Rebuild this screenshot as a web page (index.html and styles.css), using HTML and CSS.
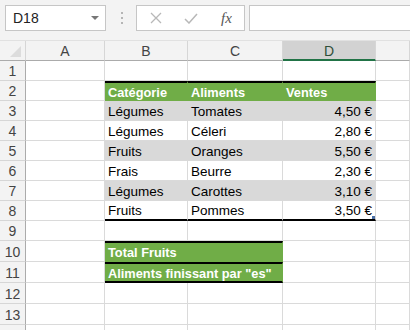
FILE: index.html
```html
<!DOCTYPE html>
<html lang="fr">
<head>
  <meta charset="UTF-8" />
  <meta name="viewport" content="width=device-width, initial-scale=1.0" />
  <title>Classeur</title>
  <link rel="stylesheet" href="styles.css">
</head>
<body>
  <div class="formula-bar">
    <div class="name-box">
      <span>D18</span>
      <span class="caret"></span>
    </div>
    <div class="grip"><i></i><i></i><i></i></div>
    <div class="fx-buttons">
      <svg class="btn-icon" width="12" height="12" viewBox="0 0 12 12">
        <path d="M1 1 L11 11 M11 1 L1 11" stroke="#b8b8b8" stroke-width="1.3" fill="none" />
      </svg>
      <svg class="btn-icon" width="14" height="11" viewBox="0 0 14 11">
        <path d="M1 6 L5 10 L13 1" stroke="#b8b8b8" stroke-width="1.5" fill="none" />
      </svg>
      <span class="fx">fx</span>
    </div>
    <div class="formula-input"></div>
  </div>

  <div class="sheet">
    <div class="row head">
      <div class="c corner"><span class="tri"></span></div>
      <div class="c ch">A</div>
      <div class="c ch">B</div>
      <div class="c ch">C</div>
      <div class="c ch selected">D</div>
      <div class="c ch"></div>
    </div>
    <div class="row">
      <div class="c rh">1</div><div class="c"></div><div class="c"></div><div class="c"></div><div class="c"></div><div class="c"></div>
    </div>
    <div class="row">
      <div class="c rh">2</div><div class="c"></div>
      <div class="c green top">Catégorie</div>
      <div class="c green top">Aliments</div>
      <div class="c green top">Ventes</div>
      <div class="c"></div>
    </div>
    <div class="row">
      <div class="c rh">3</div><div class="c"></div>
      <div class="c gray">Légumes</div>
      <div class="c gray">Tomates</div>
      <div class="c gray num">4,50 €</div>
      <div class="c"></div>
    </div>
    <div class="row">
      <div class="c rh">4</div><div class="c"></div>
      <div class="c">Légumes</div>
      <div class="c">Céleri</div>
      <div class="c num">2,80 €</div>
      <div class="c"></div>
    </div>
    <div class="row">
      <div class="c rh">5</div><div class="c"></div>
      <div class="c gray">Fruits</div>
      <div class="c gray">Oranges</div>
      <div class="c gray num">5,50 €</div>
      <div class="c"></div>
    </div>
    <div class="row">
      <div class="c rh">6</div><div class="c"></div>
      <div class="c">Frais</div>
      <div class="c">Beurre</div>
      <div class="c num">2,30 €</div>
      <div class="c"></div>
    </div>
    <div class="row">
      <div class="c rh">7</div><div class="c"></div>
      <div class="c gray">Légumes</div>
      <div class="c gray">Carottes</div>
      <div class="c gray num">3,10 €</div>
      <div class="c"></div>
    </div>
    <div class="row">
      <div class="c rh">8</div><div class="c"></div>
      <div class="c bottom">Fruits</div>
      <div class="c bottom">Pommes</div>
      <div class="c bottom num last">3,50 €<span class="mark"></span></div>
      <div class="c"></div>
    </div>
    <div class="row">
      <div class="c rh">9</div><div class="c"></div><div class="c"></div><div class="c"></div><div class="c"></div><div class="c"></div>
    </div>
    <div class="row tall">
      <div class="c rh">10</div><div class="c"></div>
      <div class="c green top span2">Total Fruits</div>
      <div class="c"></div>
      <div class="c"></div>
    </div>
    <div class="row tall">
      <div class="c rh">11</div><div class="c"></div>
      <div class="c green top bottom span2">Aliments finissant par "es"</div>
      <div class="c"></div>
      <div class="c"></div>
    </div>
    <div class="row tall">
      <div class="c rh">12</div><div class="c"></div><div class="c"></div><div class="c"></div><div class="c"></div><div class="c"></div>
    </div>
    <div class="row tall">
      <div class="c rh">13</div><div class="c"></div><div class="c"></div><div class="c"></div><div class="c"></div><div class="c"></div>
    </div>
    <div class="row tall">
      <div class="c rh"></div><div class="c"></div><div class="c"></div><div class="c"></div><div class="c"></div><div class="c"></div>
    </div>
  </div>
</body>
</html>
```

FILE: styles.css
```css
body {
  margin: 0;
  font-family: "Liberation Sans", Arial, sans-serif;
  background: #fff;
  overflow: hidden;
}

/* formula bar */
.formula-bar {
  display: flex;
  align-items: center;
  height: 41px;
  padding: 0 0 4px 5px;
  box-sizing: border-box;
  background: #f3f3f3;
  border-bottom: 1px solid #e1e1e1;
}

.name-box {
  display: flex;
  align-items: center;
  justify-content: space-between;
  width: 101px;
  height: 26px;
  box-sizing: border-box;
  padding: 0 6px 0 7px;
  background: #fff;
  border: 1px solid #c6c6c6;
  font-size: 14px;
  color: #222;
}

.caret {
  width: 0;
  height: 0;
  border-left: 4px solid transparent;
  border-right: 4px solid transparent;
  border-top: 4px solid #777;
}

.grip {
  display: flex;
  flex-direction: column;
  gap: 3px;
  margin: 0 13px 0 15px;
}

.grip i {
  width: 2px;
  height: 2px;
  background: #b5b5b5;
}

.fx-buttons {
  display: flex;
  align-items: center;
  width: 109px;
  height: 26px;
  box-sizing: border-box;
  padding-left: 13px;
  background: #fff;
  border: 1px solid #c6c6c6;
}

.btn-icon:nth-child(2) {
  margin-left: 22px;
}

.fx {
  margin-left: 23px;
  font-family: "Liberation Serif", serif;
  font-style: italic;
  font-size: 15px;
  color: #555;
}

.formula-input {
  flex: 1;
  height: 26px;
  margin-left: 4px;
  box-sizing: border-box;
  background: #fff;
  border: 1px solid #c6c6c6;
  border-right: none;
}

/* grid */
.row {
  display: grid;
  grid-template-columns: 26px 79px 83px 95px 93px 1fr;
  height: 20px;
}

.row.tall {
  height: 21px;
}

.c {
  display: flex;
  align-items: center;
  box-sizing: border-box;
  padding: 1px 3px 0;
  border-right: 1px solid #dadada;
  border-bottom: 1px solid #dadada;
  font-size: 13.5px;
  color: #000;
  white-space: nowrap;
  position: relative;
}

.head .c {
  justify-content: center;
  background: #f3f3f3;
  border-right-color: #d6d6d6;
  border-bottom-color: #ababab;
  color: #444;
  font-size: 14px;
}

.head .selected {
  background: #d2d2d2;
  border-bottom: 2px solid #217346;
  color: #2f4f3a;
}

.corner .tri {
  position: absolute;
  right: 4px;
  bottom: 3px;
  width: 11px;
  height: 11px;
  background: #dcdcdc;
  clip-path: polygon(100% 0, 100% 100%, 0 100%);
}

.rh {
  justify-content: center;
  background: #f3f3f3;
  border-right-color: #ababab;
  border-bottom-color: #d6d6d6;
  color: #444;
  font-size: 14px;
}

.green {
  background: #70ad47;
  border-right-color: #70ad47;
  border-bottom-color: #70ad47;
  color: #fff;
  font-weight: bold;
  font-size: 12.8px;
}

.gray {
  background: #d9d9d9;
  border-right-color: #d9d9d9;
  border-bottom-color: #d9d9d9;
}

.num {
  justify-content: flex-end;
}

.top {
  border-top: 2px solid #000;
}

.bottom {
  border-bottom: 2px solid #000;
}

.span2 {
  grid-column: span 2;
}

.mark {
  position: absolute;
  right: 0;
  bottom: 0;
  width: 3px;
  height: 3px;
  background: #4a6fa5;
}
```
